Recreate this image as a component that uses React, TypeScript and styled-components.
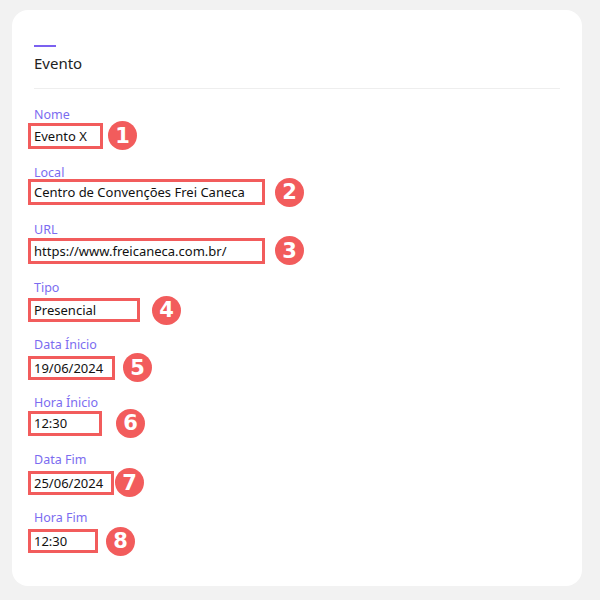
import React from "react";
import styled, { createGlobalStyle } from "styled-components";

const Global = createGlobalStyle`
  html, body { margin: 0; padding: 0; background: #f2f2f2; }
  body { font-family: "Noto Sans", "DejaVu Sans", sans-serif; }
  * { box-sizing: border-box; }
`;

const Page = styled.div`
  padding: 10px 18px 14px 12px;
`;

const Card = styled.section`
  width: 570px;
  height: 576px;
  background: #ffffff;
  border-radius: 16px;
  padding: 35px 22px 20px 22px;
`;

const Accent = styled.div`
  width: 22px;
  height: 2px;
  background: #7b61f0;
`;

const Title = styled.h2`
  margin: 6px 0 0 0;
  font-size: 15px;
  line-height: 20px;
  font-weight: 400;
  color: #222222;
`;

const Divider = styled.hr`
  margin: 15px 0 0 0;
  border: 0;
  border-top: 1px solid #eeeeee;
  height: 0;
`;

const Fields = styled.div`
  margin-top: 16px;
  display: flex;
  flex-direction: column;
`;

const Field = styled.div`
  height: 57.5px;
  display: flex;
  flex-direction: column;
`;

const Label = styled.label`
  margin-top: 2px;
  font-size: 12.5px;
  line-height: 16px;
  color: #7b6cf0;
`;

const Row = styled.div<{ $offset: number }>`
  display: flex;
  align-items: center;
  margin-top: ${(p) => p.$offset}px;
  margin-left: -6px;
`;

const Value = styled.div<{ $w: number; $h: number }>`
  width: ${(p) => p.$w}px;
  height: ${(p) => p.$h}px;
  border: 3px solid #f25c5c;
  padding-left: 3px;
  display: flex;
  align-items: center;
  font-size: 13px;
  color: #111111;
  white-space: nowrap;
`;

const Badge = styled.span<{ $gap: number }>`
  margin-left: ${(p) => p.$gap}px;
  width: 29px;
  height: 29px;
  border-radius: 50%;
  background: #f25c5c;
  color: #ffffff;
  font-family: "DejaVu Sans", sans-serif;
  font-weight: 700;
  font-size: 21px;
  display: flex;
  align-items: center;
  justify-content: center;
`;

const items = [
  { label: "Nome", value: "Evento X", w: 75, h: 26, off: -2, gap: 5 },
  { label: "Local", value: "Centro de Convenções Frei Caneca", w: 237, h: 26, off: -3, gap: 10 },
  { label: "URL", value: "https://www.freicaneca.com.br/", w: 237, h: 26, off: -2, gap: 10 },
  { label: "Tipo", value: "Presencial", w: 112, h: 24, off: 0, gap: 12 },
  { label: "Data Ínicio", value: "19/06/2024", w: 87, h: 24, off: 0, gap: 8 },
  { label: "Hora Ínicio", value: "12:30", w: 74, h: 25, off: -2, gap: 14 },
  { label: "Data Fim", value: "25/06/2024", w: 86, h: 24, off: 0, gap: 1 },
  { label: "Hora Fim", value: "12:30", w: 70, h: 24, off: 1, gap: 8 },
];

export default function App() {
  return (
    <Page>
      <Global />
      <Card>
        <Accent />
        <Title>Evento</Title>
        <Divider />
        <Fields>
          {items.map((it, i) => (
            <Field key={it.label}>
              <Label>{it.label}</Label>
              <Row $offset={it.off}>
                <Value $w={it.w} $h={it.h}>{it.value}</Value>
                <Badge $gap={it.gap}>{i + 1}</Badge>
              </Row>
            </Field>
          ))}
        </Fields>
      </Card>
    </Page>
  );
}
